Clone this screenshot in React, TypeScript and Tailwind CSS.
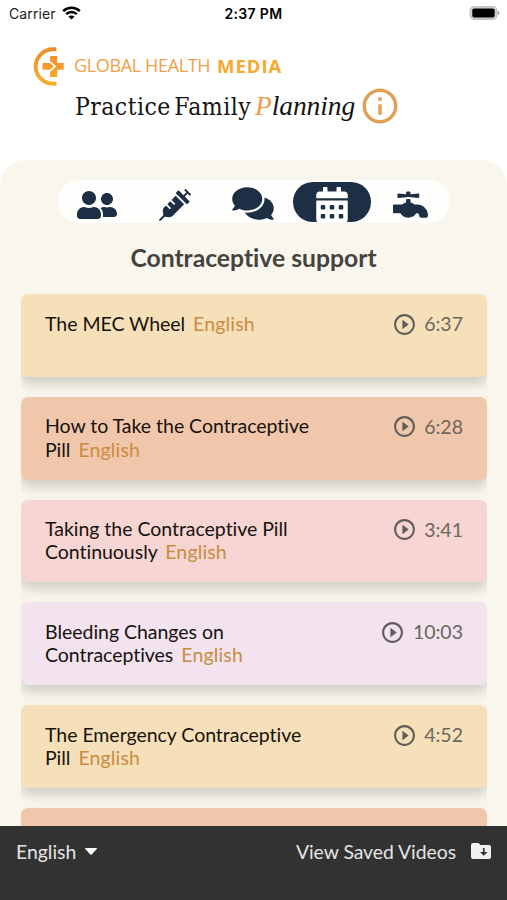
import React from 'react';
import { FaUserFriends, FaSyringe, FaComments, FaCalendarAlt, FaFaucet } from 'react-icons/fa';
import { MdInfoOutline, MdPlayCircleOutline } from 'react-icons/md';

interface Video {
  title: string;
  duration: string;
  color: string;
}

const videos: Video[] = [
  { title: 'The MEC Wheel', duration: '6:37', color: 'bg-[#f6e0b9]' },
  { title: 'How to Take the Contraceptive Pill', duration: '6:28', color: 'bg-[#f1c7ab]' },
  { title: 'Taking the Contraceptive Pill Continuously', duration: '3:41', color: 'bg-[#f6d5d3]' },
  { title: 'Bleeding Changes on Contraceptives', duration: '10:03', color: 'bg-[#f2e3ee]' },
  { title: 'The Emergency Contraceptive Pill', duration: '4:52', color: 'bg-[#f6e0b9]' },
];

const StatusBar = () => (
  <div className="grid h-7 grid-cols-3 items-center px-[7px] font-['Inter',sans-serif] text-[#1c1c1c]">
    <div className="-mt-px flex items-center gap-[6px] pl-[2px]">
      <span className="text-[14px] tracking-[0.1px]">Carrier</span>
      <svg className="-mt-[2px] h-[14px] w-[19px]" viewBox="0 0 19 14" fill="none" stroke="#000">
        <path d="M1.2 5.1C5.8.6 13.2.6 17.8 5.1" strokeWidth="2.6" />
        <path d="M4.1 8.1c3-2.9 7.8-2.9 10.8 0" strokeWidth="2.4" />
        <path d="M9.5 13.6 6.4 10.6c1.8-1.6 4.4-1.6 6.2 0z" fill="#000" stroke="none" />
      </svg>
    </div>
    <span className="-mt-px text-center text-[14px] font-semibold tracking-[0.35px] text-black">2:37 PM</span>
    <svg className="-mt-[2px] h-[14px] w-[31px] justify-self-end" viewBox="0 0 31 14">
      <rect x="1.2" y="0.75" width="26.6" height="12.5" rx="3.8" fill="#d4d4d4" stroke="#c0c0c0" strokeWidth="1.3" />
      <rect x="3.3" y="2.4" width="22.4" height="9.2" rx="1.8" fill="#000" />
      <path d="M28.6 4.7c2.4.7 2.4 3.9 0 4.6z" fill="#a8a8a8" />
    </svg>
  </div>
);

const Header = () => (
  <header className="flex h-[132px] flex-col pl-[33px] pt-[18px]">
    <div className="flex h-10 items-center gap-[10px]">
      <svg className="h-10 w-[31px]" viewBox="0 0 31 40">
        <defs>
          <linearGradient id="logo" gradientUnits="userSpaceOnUse" x1="0" y1="0" x2="0" y2="40">
            <stop offset="0" stopColor="#f18a2c" />
            <stop offset="1" stopColor="#fbae28" />
          </linearGradient>
        </defs>
        <path d="M23.4 3.2h-3.4a17.3 17.3 0 0 0 0 34.6h3.4" fill="none" stroke="url(#logo)" strokeWidth="3.9" />
        <path d="M17 10h7.2v7h6.5v6.8h-6.5V31H17v-7.2H9.5V17H17z" fill="url(#logo)" />
        <path d="M17.2 16 22 20.400l-4.800 4.400" fill="none" stroke="#fff" strokeWidth="1.7" />
      </svg>
      <span className="flex gap-[5px] whitespace-nowrap font-['Open_Sans',sans-serif]">
        <span className="w-[138px] text-[18px] font-normal tracking-[-0.35px] text-[#f39f48]">GLOBAL HEALTH</span>
        <b className="text-[18.5px] font-bold tracking-[1px] text-[#f8a72f]">MEDIA</b>
      </span>
    </div>
    <div className="flex h-[40px] items-center pl-[42px]">
      <h1 className="flex items-baseline whitespace-nowrap text-[#141414]">
        <span className="w-[180px] font-['DejaVu_Serif_Condensed','DejaVu_Serif',serif] text-[24.5px] tracking-[0.45px] [word-spacing:-4px]">Practice Family</span>
        <span className="font-['Liberation_Serif',serif] text-[27.5px] italic tracking-[-0.1px]">
          <span className="text-[#e7a052]">P</span>lanning
        </span>
      </h1>
      <MdInfoOutline className="ml-[4px] h-[42px] w-[42px] text-[#dfa158]" />
    </div>
  </header>
);

const CategoryTabs = () => (
  <nav className="mx-auto flex h-[43px] w-[392px] items-center rounded-full bg-[#fefefd] text-[#1d2f45]">
    <button className="flex w-[78px] justify-center pt-[6px]">
      <FaUserFriends className="h-8 w-10" />
    </button>
    <button className="flex w-[78px] justify-center pt-[6px]">
      <FaSyringe className="h-8 w-8" />
    </button>
    <button className="flex w-[79px] justify-center pt-[3px]">
      <FaComments className="h-[37px] w-[42px]" />
    </button>
    <button className="flex h-10 w-[78px] items-start justify-center overflow-hidden rounded-full bg-[#1d2f45] pt-[5px] text-white">
      <FaCalendarAlt className="h-9 w-8 shrink-0" />
    </button>
    <button className="flex w-[79px] justify-center pt-[5px]">
      <FaFaucet className="h-[35px] w-[35px]" />
    </button>
  </nav>
);

const cardClass = 'h-[82.75px] shrink-0 rounded-[7px] shadow-[0_7px_12px_0_rgba(0,0,0,0.17)]';

const VideoCard: React.FC<{ video: Video }> = ({ video }) => (
  <li className={`flex items-start justify-between px-6 pt-[17.5px] ${cardClass} ${video.color}`}>
    <p className="w-[275px] text-[19.5px] leading-[23.4px] tracking-[-0.03px] text-[#17120e]">
      {video.title} <span className="ml-[3px] tracking-[0.15px] text-[#ca8c3f]">English</span>
    </p>
    <div className="flex items-center gap-[7.5px] text-[19.5px] leading-[23px] text-[#6d6760]">
      <MdPlayCircleOutline className="h-[25px] w-[25px] text-[#5f5c5a]" />
      <span className="-mt-px">{video.duration}</span>
    </div>
  </li>
);

const Footer = () => (
  <footer className="flex h-[74px] shrink-0 items-start justify-between bg-[#323232] pl-4 pr-4 pt-[14px] text-[19.4px] leading-6 text-[#e4e4e4]">
    <button className="flex items-center gap-[9px]">
      <span>English</span>
      <svg className="-mt-[2px] h-[7px] w-[12px]" viewBox="0 0 12 7">
        <path d="M.6 0h10.8c.6 0 .8.6.4 1L6.6 6.5c-.4.4-.8.4-1.2 0L.2 1C-.2.6 0 0 .6 0z" fill="#fff" />
      </svg>
    </button>
    <button className="flex items-center gap-[15px]">
      <span className="tracking-[-0.05px]">View Saved Videos</span>
      <svg className="-mt-[2px] h-4 w-5" viewBox="0 0 20 16">
        <path d="M2 0h5.5l2 2H18a2 2 0 0 1 2 2v10a2 2 0 0 1-2 2H2a2 2 0 0 1-2-2V2a2 2 0 0 1 2-2z" fill="#f0f0f0" />
        <path d="M11.9 5h1.7v4h2.9l-3.75 3.8L9 9h2.9z" fill="#323232" />
      </svg>
    </button>
  </footer>
);

export default function App() {
  return (
    <div className="flex h-[900px] w-[507px] flex-col overflow-hidden bg-white font-['Lato',sans-serif] [font-variant-ligatures:none]">
      <StatusBar />
      <Header />
      <main className="flex min-h-0 flex-1 flex-col overflow-hidden rounded-t-[25px] bg-[#f9f6ed] pt-5">
        <CategoryTabs />
        <h2 className="mt-[18px] text-center text-[24.7px] font-bold leading-[33px] text-[#444340]">Contraceptive support</h2>
        <ul className="ml-[21px] mt-5 flex min-h-0 w-[466px] flex-1 flex-col gap-5 overflow-hidden">
          {videos.map((video) => (
            <VideoCard key={video.title} video={video} />
          ))}
          <li className={`bg-[#f1c7ab] ${cardClass}`} />
        </ul>
      </main>
      <Footer />
    </div>
  );
}
